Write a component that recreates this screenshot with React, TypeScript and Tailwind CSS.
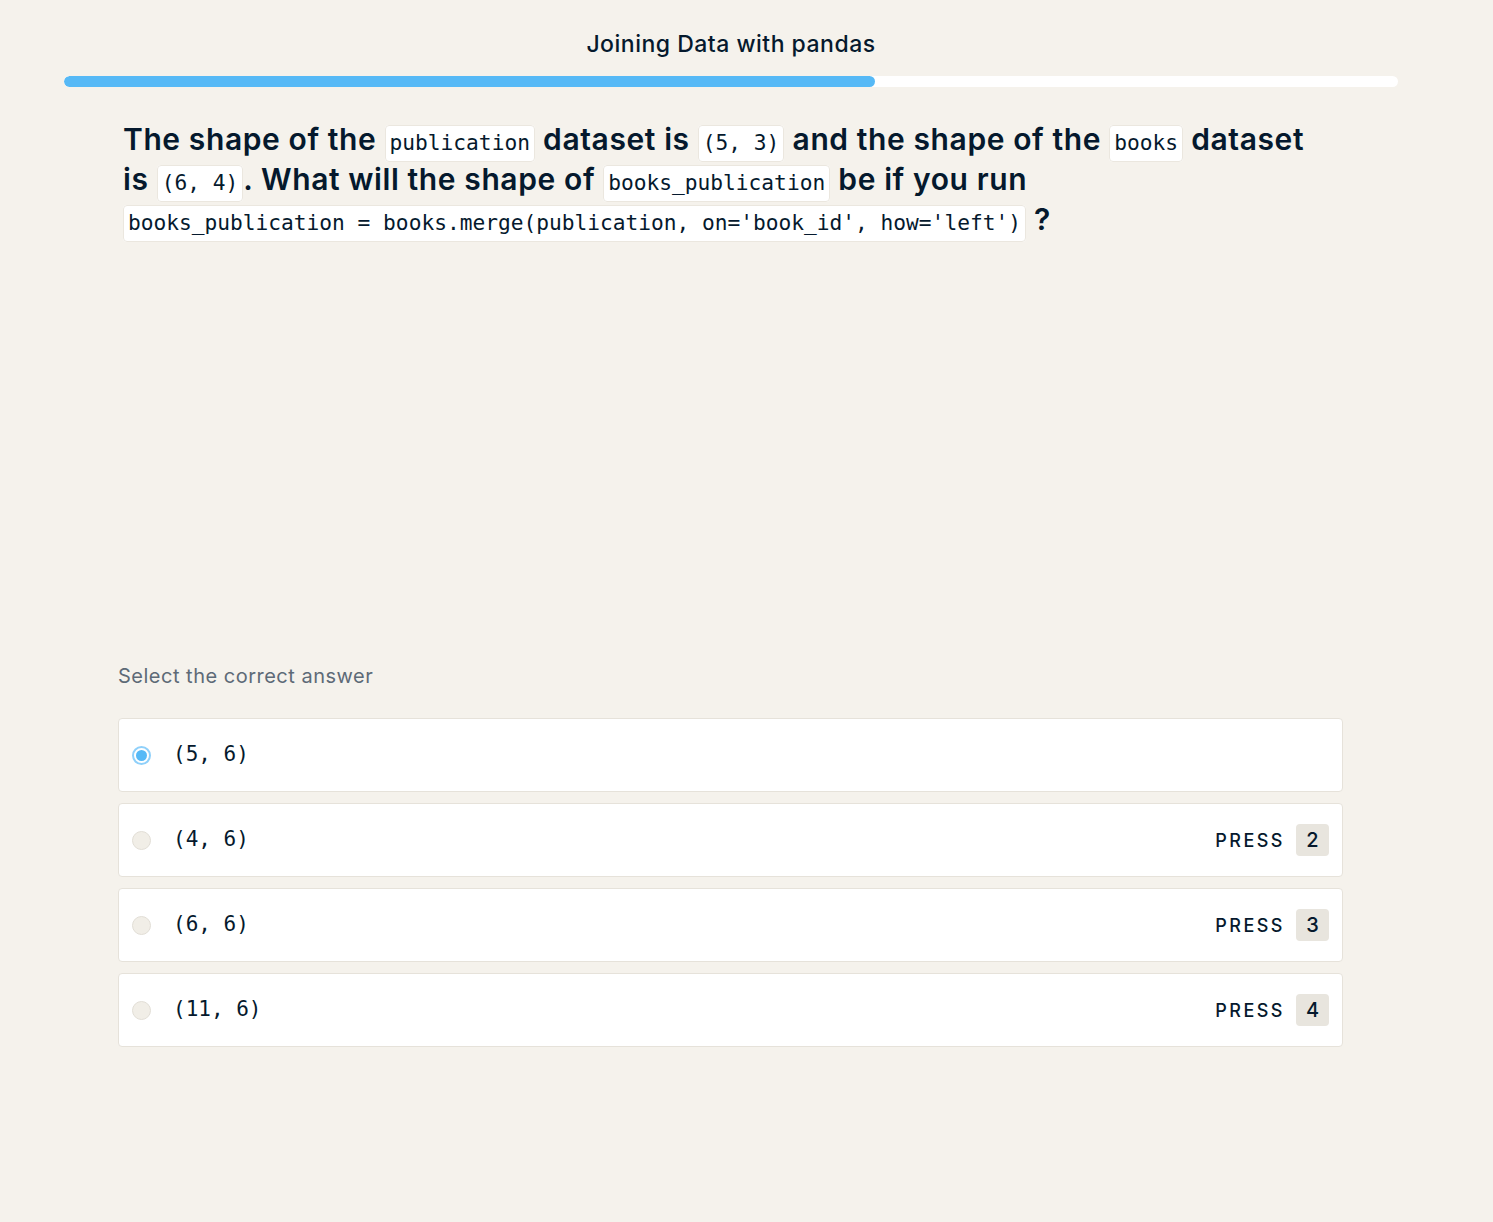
import React from "react";

const Code = ({ children }: { children: React.ReactNode }) => (
  <code className="rounded-[4px] border border-[#ebe7df] bg-white px-[4px] pt-[4px] pb-[6px] font-['DejaVu_Sans_Mono',monospace] text-[21.2px] font-normal leading-none tracking-[0px] text-[#05192d]">
    {children}
  </code>
);

const Radio = ({ selected }: { selected?: boolean }) =>
  selected ? (
    <span className="flex h-[19px] w-[19px] items-center justify-center rounded-full border-2 border-[#8fd0fa] bg-white">
      <span className="h-[11px] w-[11px] rounded-full bg-[#56b9f6]" />
    </span>
  ) : (
    <span className="h-[19px] w-[19px] rounded-full border border-[#e2ded6] bg-[#f1eee7]" />
  );

const Option = ({ label, n, selected }: { label: string; n: number; selected?: boolean }) => (
  <div className="flex h-[74px] items-center rounded-[4px] border border-[#e6e2da] bg-white pl-[13px] pr-[13px]">
    <Radio selected={selected} />
    <span className="ml-[22px] font-['DejaVu_Sans_Mono',monospace] text-[21px] text-[#05192d] whitespace-pre">{label}</span>
    {!selected && (
      <div className="ml-auto flex items-center">
        <span className="font-['Inter',sans-serif] text-[18px] font-medium tracking-[2.5px] text-[#05192d]">PRESS</span>
        <span className="ml-[11px] flex h-[32px] w-[33px] items-center justify-center rounded-[4px] bg-[#e8e5de] font-['Inter',sans-serif] text-[20px] font-medium text-[#05192d]">
          {n}
        </span>
      </div>
    )}
  </div>
);

export default function App() {
  return (
    <div className="min-h-[1222px] w-full bg-[#f5f2ec] font-['Inter',sans-serif] text-[#05192d]">
      <div className="w-[1462px]">
        <div className="pt-[29px] text-center text-[23px] font-medium leading-[30px] tracking-[0.5px]">Joining Data with pandas</div>
        <div className="mx-[64px] mt-[17px] h-[11px] overflow-hidden rounded-full bg-white">
          <div className="h-full w-[811px] rounded-full bg-[#56b9f6]" />
        </div>
        <div className="ml-[118px] w-[1225px]">
          <div className="mt-[32px] pl-[5px] text-[30px] font-semibold leading-[40px] tracking-[0.6px]">
            The shape of the <Code>publication</Code> dataset is <Code>(5, 3)</Code> and the shape of the <Code>books</Code> dataset
            <br />
            is <Code>(6, 4)</Code>. What will the shape of <Code>books_publication</Code> be if you run
            <br />
            <Code>books_publication = books.merge(publication, on='book_id', how='left')</Code> ?
          </div>
          <div className="mt-[423px] text-[20px] leading-[28px] tracking-[0.5px] text-[#5d6a77]">Select the correct answer</div>
          <div className="mt-[28px] flex flex-col gap-[11px]">
            <Option label="(5, 6)" n={1} selected />
            <Option label="(4, 6)" n={2} />
            <Option label="(6, 6)" n={3} />
            <Option label="(11, 6)" n={4} />
          </div>
        </div>
      </div>
    </div>
  );
}
